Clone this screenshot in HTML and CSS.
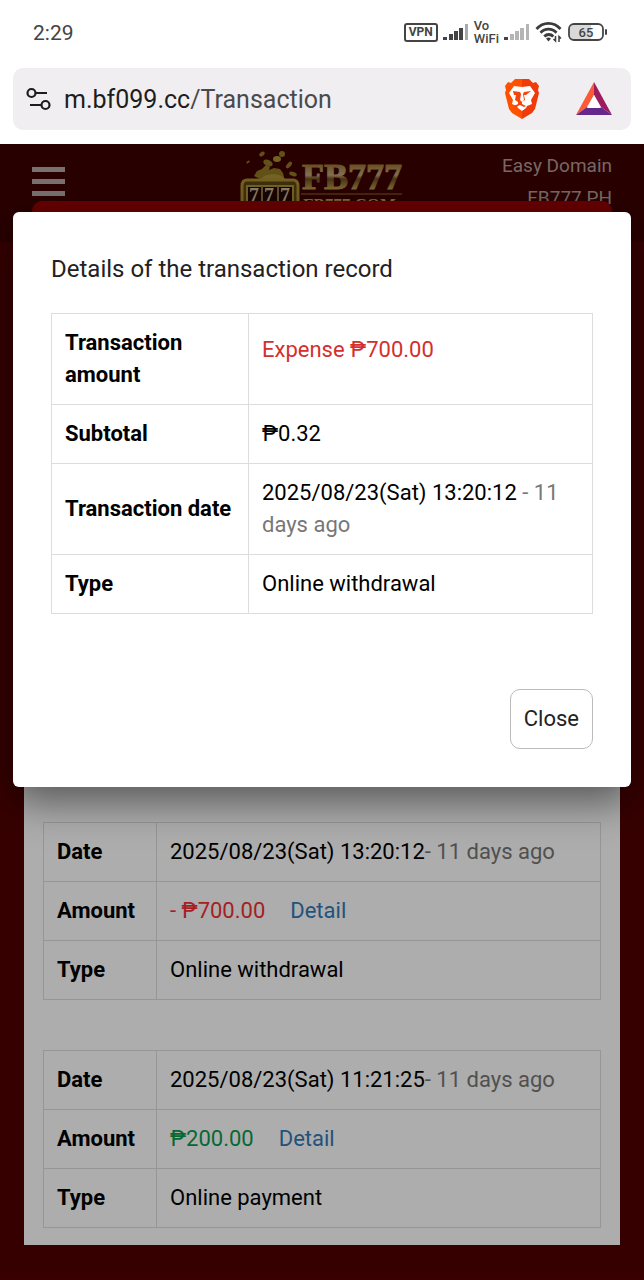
FILE: index.html
```html
<!DOCTYPE html>
<html lang="en">
<head>
    <meta charset="UTF-8">
    <meta name="viewport" content="width=device-width, initial-scale=1.0">
    <title>Transaction</title>
    <link rel="stylesheet" href="styles.css">
</head>
<body>
    <div class="status-bar">
        <span class="clock">2:29</span>
        <div class="status-icons">
            <span class="vpn">VPN</span>
            <svg width="26" height="18" viewBox="0 0 26 18" fill="#444">
                <rect x="0" y="14" width="4" height="3"/>
                <rect x="6" y="11" width="4" height="6"/>
                <rect x="11" y="8" width="4" height="9"/>
                <rect x="16" y="5" width="4" height="12"/>
                <rect x="22" y="1" width="3" height="16" fill="#aaa"/>
            </svg>
            <span class="vowifi">Vo<br>WiFi</span>
            <svg width="26" height="18" viewBox="0 0 26 18" fill="#b5b5b5">
                <rect x="0" y="14" width="4" height="3" fill="#444"/>
                <rect x="6" y="11" width="4" height="6"/>
                <rect x="11" y="8" width="4" height="9"/>
                <rect x="16" y="5" width="4" height="12"/>
                <rect x="22" y="1" width="3" height="16"/>
            </svg>
            <svg width="28" height="22" viewBox="0 0 28 22" fill="none" stroke="#3c3c3c" stroke-width="2.8">
                <path d="M1.5 8C8 .5 19 .5 25.500 8"/>
                <path d="M5.500 11.800c4.500-4.900 11.500-4.900 16 0"/>
                <path d="M9.300 15.500c2.500-2.700 6.500-2.700 9 0"/>
                <path d="M11 17.500a4 4 0 0 1 5 0l-2.500 3z" fill="#3c3c3c" stroke="none"/>
                <path d="M20.500 15v5l-2-2M24 21v-5.500l2 2" stroke-width="1.500"/>
            </svg>
            <svg width="40" height="18" viewBox="0 0 40 18">
                <rect x="1" y="1" width="34" height="16" rx="5" fill="#fff"/>
                <path d="M6 2h17v14H6a4 4 0 0 1-4-4V6a4 4 0 0 1 4-4z" fill="#d9d9d9"/>
                <rect x="1" y="1" width="34" height="16" rx="5" fill="none" stroke="#444" stroke-width="1.800"/>
                <rect x="37" y="6" width="2" height="6" rx="1" fill="#444"/>
                <text x="18" y="14" text-anchor="middle" class="battery-text">65</text>
            </svg>
        </div>
    </div>

    <div class="address-bar">
        <svg width="25" height="24" viewBox="0 0 25 24" fill="none" stroke="#1d1d1f" stroke-width="2.200">
            <circle cx="5.500" cy="6" r="4"/>
            <path d="M9.500 6H21M4 18h11.500"/>
            <circle cx="19.500" cy="18" r="4"/>
        </svg>
        <a class="url" href="#"><b>m.bf099.cc</b>/Transaction</a>
        <svg class="lion" width="36" height="42" viewBox="0 0 36 42">
            <defs>
                <linearGradient id="lionFill">
                    <stop offset="0.500" stop-color="#ff5000"/>
                    <stop offset="0.500" stop-color="#f03a0a"/>
                </linearGradient>
            </defs>
            <path d="M11 1h14l4 4 3-1 3 4-1 4 1 3-4 16-3 4-10 6-10-6-3-4L1 15l1-3-1-4 3-4 3 1z" fill="url(#lionFill)"/>
            <path d="M10 8l8 1 8-1 5 7-4 7 1 4-5 2-1 2-4 3-4-3-1-2-5-2 1-4-4-7z" fill="#fff"/>
            <path d="M9 13l7 1 1 2-1 6 2 2 2-2-1-6 1-2 7-1-5 4-2 0 1 5-3 2v2l4 2-2 1-2-1-2-1-2 1-2 1-2-1 4-2v-2l-3-2 1-5h-2z" fill="#f5450a"/>
        </svg>
        <svg width="36" height="34" viewBox="0 0 36 34">
            <path d="M18 0v13l-7 12L0 33z" fill="#fb5a36"/>
            <path d="M18 0l18 33-11-8-7-12z" fill="#9d1c60"/>
            <path d="M0 33l11-8h14l11 8z" fill="#64288c"/>
            <path d="M18 13l7 13H11z" fill="#fff"/>
        </svg>
    </div>

    <div class="site">
        <header class="site-header">
            <button class="menu-button" type="button" aria-label="Menu"><i></i><i></i><i></i></button>
            <svg class="logo" width="164" height="64" viewBox="0 0 164 64">
                <defs>
                    <linearGradient id="gold" x2="0" y2="1">
                        <stop offset="0.200" stop-color="#9b7734"/>
                        <stop offset="0.450" stop-color="#c0a67a"/>
                        <stop offset="0.550" stop-color="#704c20"/>
                        <stop offset="0.800" stop-color="#b29a48"/>
                    </linearGradient>
                </defs>
                <g fill="#8f7823">
                    <ellipse cx="42" cy="4" rx="3" ry="3"/>
                    <ellipse cx="37" cy="9" rx="4" ry="3" fill="#a89030"/>
                    <ellipse cx="22" cy="4" rx="3" ry="2" transform="rotate(-40 22 4)"/>
                    <ellipse cx="28" cy="13" rx="5" ry="3" transform="rotate(25 28 13)"/>
                    <ellipse cx="49" cy="15" rx="4" ry="2" transform="rotate(-50 49 15)"/>
                    <ellipse cx="8" cy="12" rx="2" ry="1" transform="rotate(-40 8 12)"/>
                    <ellipse cx="53" cy="24" rx="4" ry="2" transform="rotate(20 53 24)"/>
                    <path d="M14 26l3-5 5-2 4-4 4 2-1 3 5-2 6 1 3 4 1 4-2 3H22z"/>
                    <path d="M20 31c2-9 24-9 26 0z" fill="#a99334"/>
                </g>
                <path d="M2 60V36q0-6 5-6h46q5 0 5 6v24" fill="#5d4713" stroke="#a88c32" stroke-width="3"/>
                <path d="M7 60V36h46v24" fill="#250604" stroke="#a98e3a" stroke-width="2"/>
                <path d="M22 36v24M38 36v24" stroke="#8c7640" stroke-width="2"/>
                <text x="9" y="52" class="reels">7</text>
                <text x="24" y="52" class="reels">7</text>
                <text x="40" y="52" class="reels">7</text>
                <text x="62" y="39" class="brand" fill="url(#gold)" stroke="url(#gold)">FB777</text>
                <path d="M61 44h101" stroke="#8f6d2c"/>
                <text x="63" y="60" class="brand-small" fill="#b89650">FB777.COM</text>
            </svg>
            <div class="header-links">
                <a href="#">Easy Domain</a>
                <a href="#">FB777 PH</a>
            </div>
        </header>
        <div class="banner"></div>
        <main class="records">
            <table class="record">
                <tr><th>Date</th><td>2025/08/23(Sat) 13:20:12<span class="ago">- 11 days ago</span></td></tr>
                <tr><th>Amount</th><td><span class="minus">- ₱700.00</span><a class="detail" href="#">Detail</a></td></tr>
                <tr><th>Type</th><td>Online withdrawal</td></tr>
            </table>
            <table class="record">
                <tr><th>Date</th><td>2025/08/23(Sat) 11:21:25<span class="ago">- 11 days ago</span></td></tr>
                <tr><th>Amount</th><td><span class="plus">₱200.00</span><a class="detail" href="#">Detail</a></td></tr>
                <tr><th>Type</th><td>Online payment</td></tr>
            </table>
        </main>

        <div class="overlay">
            <div class="modal" role="dialog" aria-labelledby="modalTitle">
                <h2 id="modalTitle">Details of the transaction record</h2>
                <table class="details">
                    <tr><th>Transaction amount</th><td class="expense">Expense ₱700.00</td></tr>
                    <tr><th>Subtotal</th><td>₱0.32</td></tr>
                    <tr><th>Transaction date</th><td>2025/08/23(Sat) 13:20:12 <span class="ago">- 11 days ago</span></td></tr>
                    <tr><th>Type</th><td>Online withdrawal</td></tr>
                </table>
                <div class="modal-footer">
                    <button class="close-button" type="button">Close</button>
                </div>
            </div>
        </div>
    </div>
</body>
</html>
```
FILE: styles.css
```css
* {
    box-sizing: border-box;
}
body {
    margin: 0;
    min-height: 100vh;
    display: flex;
    flex-direction: column;
    font-family: Roboto, sans-serif;
    font-size: 22px;
    line-height: 32px;
    color: #000;
    background: #fff;
}
a {
    text-decoration: none;
}

/* phone status bar */
.status-bar {
    display: flex;
    justify-content: space-between;
    align-items: center;
    height: 68px;
    padding: 0 36px 4px 33px;
}
.clock {
    padding-top: 2px;
    font-size: 21px;
    color: #444;
}
.status-icons {
    display: flex;
    align-items: center;
    gap: 5px;
}
.vpn {
    padding: 0 3px;
    border: 2px solid #444;
    border-radius: 3px;
    font-size: 12px;
    font-weight: 700;
    line-height: 15px;
    color: #444;
}
.vowifi {
    font-size: 13px;
    font-weight: 500;
    line-height: 13px;
    color: #444;
}
.battery-text {
    font-size: 13px;
    font-weight: 500;
    fill: #444;
}

.address-bar {
    display: flex;
    align-items: center;
    height: 62px;
    margin: 0 13px 14px;
    padding: 0 19px 0 13px;
    border-radius: 10px;
    background: #f0eef0;
}
.url {
    flex: 1;
    margin-left: 13px;
    padding-top: 2px;
    font-size: 25px;
    color: #4a4a4d;
}
.url b {
    font-weight: 400;
    color: #1d1d1f;
}
.lion {
    margin-right: 36px;
}

/* web page */
.site {
    position: relative;
    flex: 1;
    background: #520000;
    padding-bottom: 35px;
}
.site-header {
    display: flex;
    justify-content: space-between;
    height: 98px;
    padding: 6px 32px 0;
    background: #3d0000;
}
.menu-button {
    display: flex;
    flex-direction: column;
    gap: 7px;
    width: 110px;
    height: 52px;
    padding: 17px 0 0;
    border: 0;
    background: none;
}
.menu-button i {
    width: 33px;
    height: 5px;
    background: #b3a6a6;
}
.reels {
    font: bold 20px "Liberation Serif", serif;
    fill: #c5b99a;
}
.brand {
    font: bold 36px "Liberation Serif", serif;
}
.brand-small {
    font: bold 17px "Liberation Serif", serif;
}
.header-links {
    display: flex;
    flex-direction: column;
    align-items: flex-end;
    width: 110px;
    font-size: 19px;
    white-space: nowrap;
}
.header-links a {
    color: #b09a96;
}
.banner {
    position: relative;
    height: 70px;
    margin: -41px 32px 0;
    border-radius: 10px 10px 0 0;
    background: #980000;
}
.records {
    display: flex;
    flex-direction: column;
    gap: 50px;
    margin: 0 24px;
    padding: 551px 19px 17px;
    background: #fff;
}

table {
    width: 100%;
    border-collapse: collapse;
}
th, td {
    padding: 13px;
    border: 1px solid #ddd;
    text-align: left;
}
th {
    font-weight: 700;
}
.record th {
    width: 113px;
}
.ago {
    color: #777;
}
.record .detail {
    margin-left: 25px;
    color: #337ab7;
}
.minus {
    color: #f52f35;
}
.plus {
    color: #0a9b4c;
}

/* dialog */
.overlay {
    position: absolute;
    inset: 0;
    padding: 68px 13px 0;
    background: rgba(0, 0, 0, 0.32);
}
.modal {
    padding: 41px 38px 38px;
    border-radius: 6px;
    background: #fff;
    box-shadow: 0 14px 40px rgba(0, 0, 0, 0.5);
}
.modal h2 {
    margin: 0 0 28px;
    font-size: 24px;
    line-height: 32px;
    font-weight: 400;
    color: #222;
}
.details th {
    width: 197px;
}
.details .expense {
    padding-bottom: 32px;
    color: #d32f2f;
}
.modal-footer {
    display: flex;
    justify-content: flex-end;
    margin-top: 75px;
}
.close-button {
    padding: 12px 13px;
    border: 1px solid #bbb;
    border-radius: 10px;
    background: #fff;
    font: 22px/34px Roboto, sans-serif;
    color: #222;
}
```
